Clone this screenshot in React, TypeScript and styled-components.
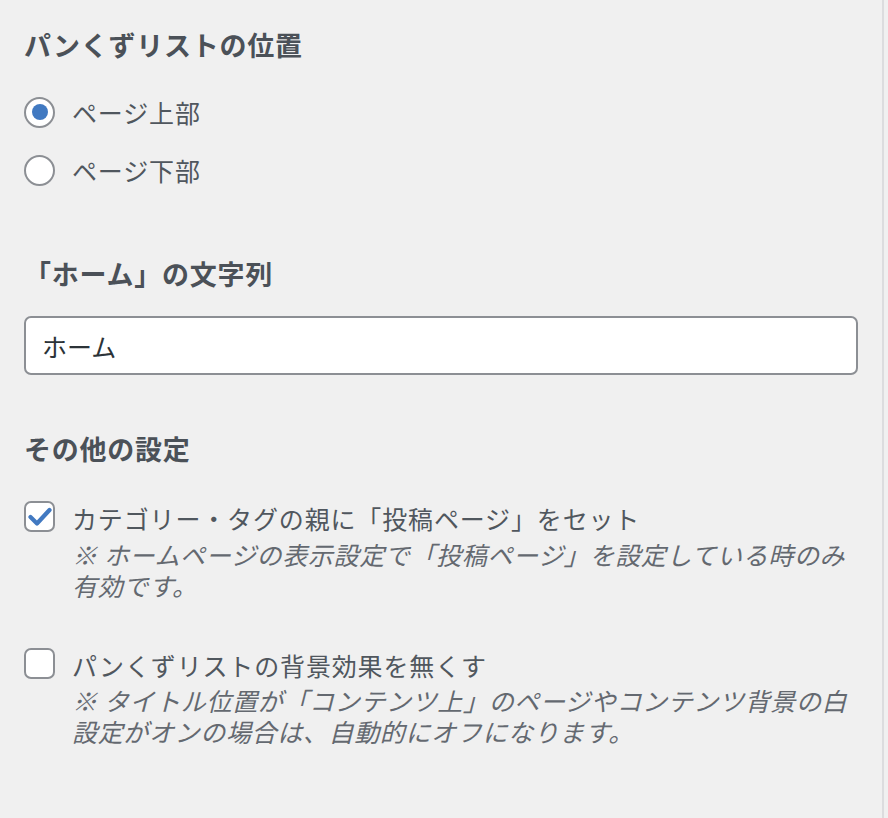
import React from "react";
import styled, { createGlobalStyle } from "styled-components";

const Global = createGlobalStyle`
  html, body { margin: 0; padding: 0; background: #f0f0f0; }
  body { font-family: "Noto Sans CJK JP", "Noto Sans", sans-serif; }
`;

const Panel = styled.div`
  width: 884px;
  min-height: 818px;
  box-sizing: border-box;
  border-right: 2px solid #dcdcde;
  padding: 28px 24px 0 24px;
  display: flex;
  flex-direction: column;
`;

const Heading = styled.h2<{ $top: number }>`
  margin: ${(p) => p.$top}px 0 0 0;
  font-size: 27px;
  line-height: 34px;
  height: 34px;
  font-weight: 700;
  letter-spacing: 0.75px;
  color: #4b5158;
`;

const RadioGroup = styled.div`
  margin-top: 21px;
  display: flex;
  flex-direction: column;
`;

const RadioRow = styled.label`
  height: 58px;
  display: flex;
  align-items: center;
  gap: 17px;
`;

const RadioCircle = styled.span<{ $checked?: boolean }>`
  width: 31px;
  height: 31px;
  box-sizing: border-box;
  border-radius: 50%;
  border: 2px solid #8c8f94;
  background: #fff;
  display: flex;
  align-items: center;
  justify-content: center;
  &::after {
    content: "";
    display: ${(p) => (p.$checked ? "block" : "none")};
    width: 16px;
    height: 16px;
    border-radius: 50%;
    background: #4179c1;
  }
`;

const LabelText = styled.span`
  font-size: 25px;
  line-height: 34px;
  letter-spacing: 0.85px;
  color: #50575e;
`;

const TextInput = styled.div`
  margin-top: 25px;
  height: 59px;
  box-sizing: border-box;
  border: 2px solid #8c8f94;
  border-radius: 7px;
  background: #fff;
  padding: 0 16px;
  display: flex;
  align-items: center;
  font-size: 25px;
  color: #2c3338;
`;

const CheckRow = styled.div<{ $top: number }>`
  margin-top: ${(p) => p.$top}px;
  display: flex;
  align-items: flex-start;
  gap: 17px;
`;

const Box = styled.span`
  flex: none;
  width: 31px;
  height: 31px;
  box-sizing: border-box;
  border: 2px solid #8c8f94;
  border-radius: 7px;
  background: #fff;
  display: flex;
  align-items: center;
  justify-content: center;
`;

const CheckBody = styled.div`
  display: flex;
  flex-direction: column;
`;

const Desc = styled.p`
  margin: 3.5px 0 0 0;
  font-size: 25px;
  line-height: 31px;
  letter-spacing: 0.65px;
  font-style: italic;
  color: #646970;
  white-space: nowrap;
`;

const Check = () => (
  <svg width="24" height="20" viewBox="0 0 24 20">
    <polyline
      points="2.5,10 9,16.5 21.5,3"
      fill="none"
      stroke="#4179c1"
      strokeWidth="4.2"
      strokeLinecap="round"
      strokeLinejoin="round"
    />
  </svg>
);

export default function App() {
  return (
    <>
      <Global />
      <Panel>
        <Heading $top={0}>パンくずリストの位置</Heading>
        <RadioGroup>
          <RadioRow>
            <RadioCircle $checked />
            <LabelText>ページ上部</LabelText>
          </RadioRow>
          <RadioRow>
            <RadioCircle />
            <LabelText>ページ下部</LabelText>
          </RadioRow>
        </RadioGroup>

        <Heading $top={58}>「ホーム」の文字列</Heading>
        <TextInput>ホーム</TextInput>

        <Heading $top={57}>その他の設定</Heading>
        <CheckRow $top={35}>
          <Box>
            <Check />
          </Box>
          <CheckBody>
            <LabelText>カテゴリー・タグの親に「投稿ページ」をセット</LabelText>
            <Desc>
              ※ ホームページの表示設定で「投稿ページ」を設定している時のみ
              <br />
              有効です。
            </Desc>
          </CheckBody>
        </CheckRow>
        <CheckRow $top={47}>
          <Box />
          <CheckBody>
            <LabelText>パンくずリストの背景効果を無くす</LabelText>
            <Desc>
              ※ タイトル位置が「コンテンツ上」のページやコンテンツ背景の白
              <br />
              設定がオンの場合は、自動的にオフになります。
            </Desc>
          </CheckBody>
        </CheckRow>
      </Panel>
    </>
  );
}
